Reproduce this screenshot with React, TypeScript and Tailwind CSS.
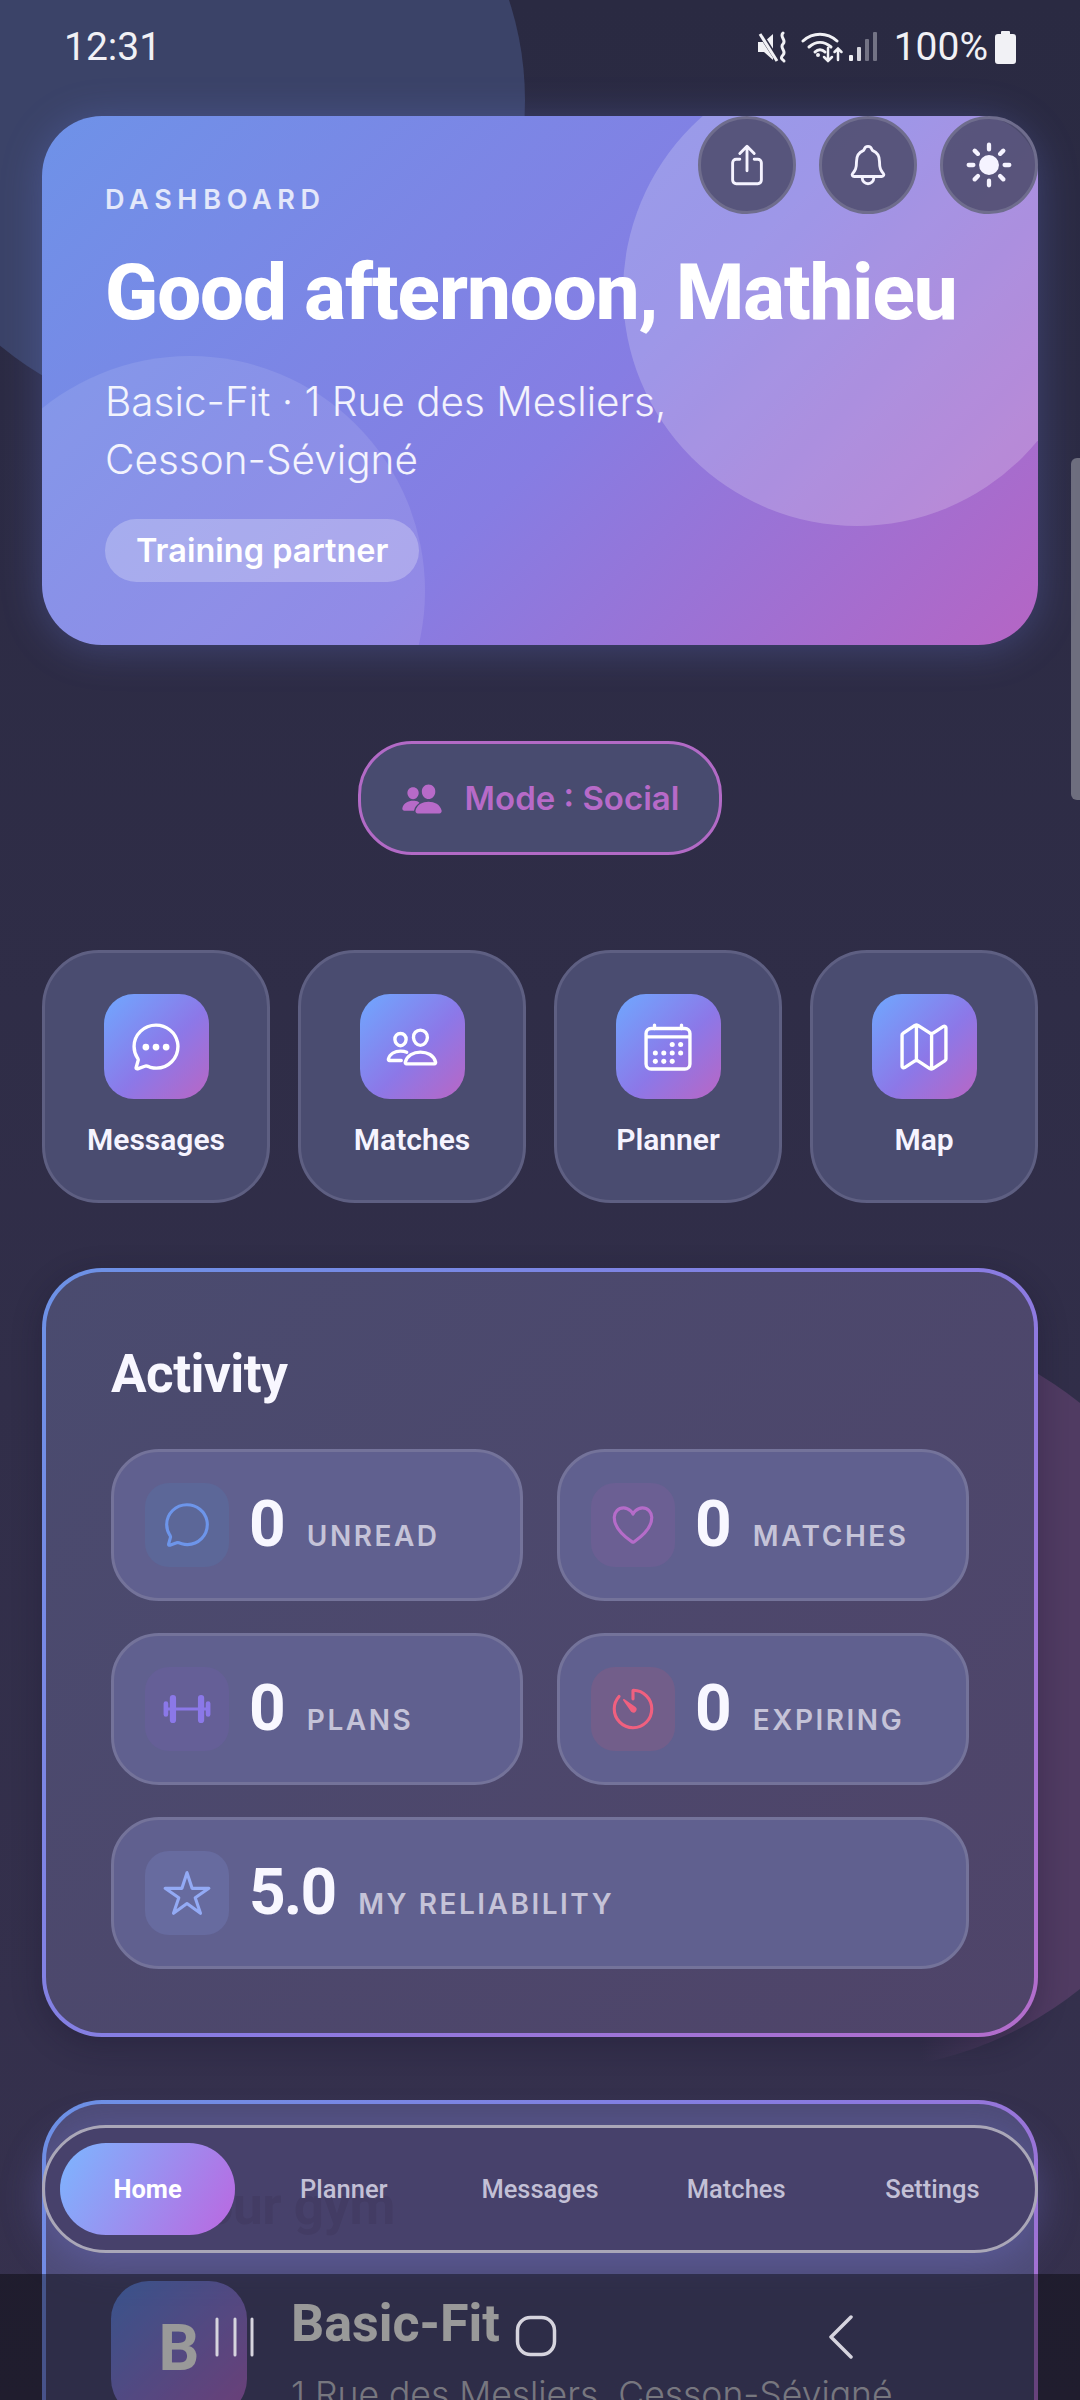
import type { ReactNode } from 'react';
import {
  IoBarbellOutline,
  IoCalendarOutline,
  IoChatbubbleEllipsesOutline,
  IoChatbubbleOutline,
  IoHeartOutline,
  IoMapOutline,
  IoNotificationsOutline,
  IoPeople,
  IoPeopleOutline,
  IoShareOutline,
  IoStarOutline,
  IoSunny,
  IoTimerOutline,
} from 'react-icons/io5';

const shortcuts = [
  { label: 'Messages', icon: <IoChatbubbleEllipsesOutline size={54} /> },
  { label: 'Matches', icon: <IoPeopleOutline size={54} /> },
  { label: 'Planner', icon: <IoCalendarOutline size={54} /> },
  { label: 'Map', icon: <IoMapOutline size={54} /> },
];

function StatusBar() {
  return (
    <div className="relative flex h-[116px] items-start justify-between pl-[64px] pr-[64px] pt-[24px] font-['Roboto',sans-serif] text-[39px] leading-[46px] text-[#f1f1f5]">
      <span>12:31</span>
      <div className="flex items-center">
        <svg width="32" height="32" viewBox="0 0 32 32" className="mr-[12px]" fill="none">
          <path d="M1 11h6l9-8v26l-9-8H1z" fill="#f1f1f5" />
          <path d="M3 2l18 28" stroke="#2b2b42" strokeWidth="5" />
          <path d="M3 3l17 27" stroke="#f1f1f5" strokeWidth="3" />
          <path d="M26 2c-4 4 4 7 0 11s4 7 0 11 1 5 1 6" stroke="#f1f1f5" strokeWidth="3" strokeLinecap="round" />
        </svg>
        <svg width="44" height="32" viewBox="0 0 44 32" className="mr-[4px]" fill="none" stroke="#f1f1f5" strokeLinecap="round">
          <path d="M2 10c10-9 24-9 34 0" strokeWidth="3" />
          <path d="M8 16c7-6 15-6 22 0" strokeWidth="3" />
          <path d="M14 21c3-3 7-3 10 0" strokeWidth="3" />
          <circle cx="17" cy="24" r="2" fill="#f1f1f5" stroke="none" />
          <path d="M27 17v13M23 26l4 4 4-4" strokeWidth="2.5" />
          <path d="M37 29V18M33.5 21l3.5-3.5 3.5 3.5" strokeWidth="2.5" />
        </svg>
        <svg width="28" height="32" viewBox="0 0 28 32" className="mr-[17px]">
          <rect x="0" y="24" width="4" height="6" rx="1" fill="#f1f1f5" />
          <rect x="8" y="16" width="4" height="14" rx="1" fill="#d4d4dc" />
          <rect x="16" y="8" width="4" height="22" rx="1" fill="#737385" />
          <rect x="24" y="1" width="4" height="29" rx="1" fill="#737385" />
        </svg>
        <span className="mr-[7px]">100%</span>
        <svg width="21" height="33" viewBox="0 0 21 33">
          <path d="M7 0h7a1 1 0 0 1 1 1v2h3a3 3 0 0 1 3 3v24a3 3 0 0 1-3 3H3a3 3 0 0 1-3-3V6a3 3 0 0 1 3-3h3V1a1 1 0 0 1 1-1z" fill="#f1f1f5" />
        </svg>
      </div>
    </div>
  );
}

function RoundButton({ children }: { children: ReactNode }) {
  return (
    <button className="flex h-[98px] w-[98px] items-center justify-center rounded-full border-[3px] border-[#6f6d8d] bg-[#504e70]/90 text-[#f5f3ff]">
      {children}
    </button>
  );
}

function Hero() {
  return (
    <div className="relative mx-[42px]">
      <div className="relative h-[529px] overflow-hidden rounded-[60px] bg-[linear-gradient(135deg,#6e92e8_0%,#867de3_55%,#b565c4_100%)] pl-[63px] pt-[69px] shadow-[0_4px_40px_rgba(110,130,230,0.3)]">
        <div className="absolute left-[581px] top-[-58px] h-[468px] w-[468px] rounded-full bg-white/20" />
        <div className="absolute left-[-87px] top-[240px] h-[470px] w-[470px] rounded-full bg-white/10" />
        <div className="relative">
          <p className="font-['Inter',sans-serif] text-[27px] font-semibold leading-[30px] tracking-[0.21em] text-white/80">DASHBOARD</p>
          <h1 className="mt-[32px] whitespace-nowrap font-['Roboto',sans-serif] text-[78px] font-extrabold leading-[92px] tracking-[-0.013em] text-white">
            Good afternoon, Mathieu
          </h1>
          <p className="mt-[34px] w-[640px] font-['Inter',sans-serif] text-[40.5px] font-light leading-[58px] text-white/90">
            Basic-Fit · 1 Rue des Mesliers, Cesson-Sévigné
          </p>
          <span className="mt-[30px] inline-block rounded-full bg-white/25 px-[31px] py-[13px] font-['Inter',sans-serif] text-[32.5px] font-semibold leading-[37px] text-white">
            Training partner
          </span>
        </div>
      </div>
      <div className="absolute right-0 top-0 flex gap-[23px]">
        <RoundButton>
          <IoShareOutline size={46} />
        </RoundButton>
        <RoundButton>
          <IoNotificationsOutline size={46} />
        </RoundButton>
        <RoundButton>
          <IoSunny size={50} />
        </RoundButton>
      </div>
    </div>
  );
}

function Stat({
  icon,
  tint,
  value,
  label,
  className,
}: {
  icon: ReactNode;
  tint: string;
  value: string;
  label: string;
  className?: string;
}) {
  return (
    <div className={`flex h-[152px] items-center rounded-[48px] border-[3px] border-[#74739a] bg-[#60608f] pl-[31px] ${className ?? ''}`}>
      <div className={`mr-[20px] flex h-[84px] w-[84px] items-center justify-center rounded-[24px] ${tint}`}>{icon}</div>
      <div className="flex items-baseline gap-[23px] pb-[1px]">
        <span className="font-['Roboto',sans-serif] text-[64px] font-bold leading-[72px] tracking-[-0.03em] text-[#f8f7ff]">{value}</span>
        <span className="font-['Inter',sans-serif] text-[28px] font-semibold tracking-[0.09em] text-[#c5c3d8]">{label}</span>
      </div>
    </div>
  );
}

function Activity() {
  return (
    <div className="mx-[42px] mt-[65px] rounded-[60px] bg-[linear-gradient(135deg,#6c92e6,#8a7be2_55%,#b46ccb)] p-[4px] shadow-[0_8px_30px_rgba(20,18,40,0.3)]">
      <div className="h-[761px] rounded-[56px] bg-[linear-gradient(135deg,#4a4b6f,#4f4469)] px-[65px] pt-[72px]">
        <h2 className="font-['Roboto',sans-serif] text-[53px] font-bold leading-[60px] tracking-[-0.01em] text-[#f8f7ff]">Activity</h2>
        <div className="mt-[45px] grid grid-cols-2 gap-x-[34px] gap-y-[32px]">
          <Stat icon={<IoChatbubbleOutline size={50} color="#6d95ea" />} tint="bg-[#5c6798]" value="0" label="UNREAD" />
          <Stat icon={<IoHeartOutline size={50} color="#b56cc9" />} tint="bg-[#6b5f93]" value="0" label="MATCHES" />
          <Stat icon={<IoBarbellOutline size={50} color="#8b78e8" />} tint="bg-[#655f97]" value="0" label="PLANS" />
          <Stat icon={<IoTimerOutline size={50} color="#f0607f" />} tint="bg-[#725e8a]" value="0" label="EXPIRING" />
          <Stat icon={<IoStarOutline size={50} color="#93aaf5" />} tint="bg-[#676b9f]" value="5.0" label="MY RELIABILITY" className="col-span-2" />
        </div>
      </div>
    </div>
  );
}

function BottomNav() {
  return (
    <div className="absolute left-[42px] right-[42px] top-[2125px] rounded-full border-[3px] border-[#aaa7b8] bg-[#473f68]/85 p-[15px] shadow-[0_8px_40px_rgba(120,120,220,0.35)]">
      <div className="grid h-[92px] grid-cols-5 gap-[21px] font-['Roboto',sans-serif] text-[25.5px] font-medium text-[#c3c0d6]">
        <span className="flex items-center justify-center rounded-[46px] bg-[linear-gradient(120deg,#7cb6ff,#bb67e0)] font-bold text-white">Home</span>
        <span className="flex items-center justify-center">Planner</span>
        <span className="flex items-center justify-center">Messages</span>
        <span className="flex items-center justify-center">Matches</span>
        <span className="flex items-center justify-center">Settings</span>
      </div>
    </div>
  );
}

function SystemBar() {
  return (
    <div className="absolute inset-x-0 bottom-0 h-[126px] bg-black/40">
      <svg className="absolute left-[213px] top-[43px]" width="44" height="40" viewBox="0 0 44 40" fill="none" stroke="#d6d4de" strokeWidth="3" strokeLinecap="round">
        <path d="M4 2v36M22 2v36M39 2v36" />
      </svg>
      <svg className="absolute left-[515px] top-[41px]" width="42" height="42" viewBox="0 0 42 42" fill="none" stroke="#d6d4de" strokeWidth="3.5">
        <rect x="2.5" y="2.5" width="37" height="37" rx="13" />
      </svg>
      <svg className="absolute left-[827px] top-[41px]" width="28" height="44" viewBox="0 0 28 44" fill="none" stroke="#d6d4de" strokeWidth="3.5" strokeLinecap="round" strokeLinejoin="round">
        <path d="M24 2L4 22l20 20" />
      </svg>
    </div>
  );
}

export default function App() {
  return (
    <div className="relative h-[2400px] w-[1080px] overflow-hidden bg-[linear-gradient(180deg,#2a2a42,#36314e)]">
      <div className="absolute left-[-115px] top-[-220px] h-[640px] w-[640px] rounded-full bg-[#3b4368]" />
      <div className="absolute left-[471px] top-[1321px] h-[750px] w-[750px] rounded-full bg-[linear-gradient(90deg,transparent_60%,#503b62_75%)]" />
      <div className="absolute right-0 top-[458px] h-[342px] w-[9px] rounded-l-[6px] bg-[#6e6e7e]" />

      <div className="relative">
        <StatusBar />
        <Hero />

        <div className="mt-[96px] flex justify-center">
          <div className="flex h-[114px] w-[364px] items-center justify-center gap-[22px] rounded-[54px] border-[3px] border-[#b26ac6] bg-[#484b6f] pt-[2px] font-['Inter',sans-serif] text-[33px] font-semibold text-[#b76ac8]">
            <IoPeople size={42} />
            <span>Mode : Social</span>
          </div>
        </div>

        <div className="mx-[42px] mt-[95px] grid grid-cols-4 gap-[28px]">
          {shortcuts.map((s) => (
            <div key={s.label} className="flex h-[253px] flex-col items-center rounded-[57px] border-[3px] border-[#5e5f82] bg-[#4a4c70] pt-[41px]">
              <div className="flex h-[105px] w-[105px] items-center justify-center rounded-[30px] bg-[linear-gradient(135deg,#6fa8ff,#8c78e8_55%,#b966c4)] text-white">
                {s.icon}
              </div>
              <span className="mt-[23px] font-['Roboto',sans-serif] text-[30px] font-semibold leading-[36px] text-[#f6f4ff]">{s.label}</span>
            </div>
          ))}
        </div>

        <Activity />

        <div className="mx-[42px] mt-[63px] rounded-[60px] bg-[linear-gradient(135deg,#6c92e6,#8a7be2_55%,#b46ccb)] p-[4px]">
          <div className="h-[400px] rounded-[56px] bg-[#4e4c78] px-[65px] pt-[72px]">
            <h2 className="pl-[62px] font-['Roboto',sans-serif] text-[53px] font-bold leading-[60px] tracking-[-0.01em] text-[#2e2a4a]">Your gym</h2>
            <div className="mt-[45px] flex gap-[44px]">
              <div className="flex h-[136px] w-[136px] shrink-0 items-center justify-center rounded-[38px] bg-[linear-gradient(135deg,#5f8be8,#b469c8)] font-['Roboto',sans-serif] text-[64px] font-bold text-white">B</div>
              <div className="pt-[14px]">
                <p className="font-['Roboto',sans-serif] text-[52px] font-bold leading-[58px] text-white">Basic-Fit</p>
                <p className="mt-[20px] whitespace-nowrap font-['Inter',sans-serif] text-[35.5px] font-light leading-[44px] text-white/70">1 Rue des Mesliers, Cesson-Sévigné</p>
              </div>
            </div>
          </div>
        </div>
      </div>

      <BottomNav />
      <SystemBar />
    </div>
  );
}
